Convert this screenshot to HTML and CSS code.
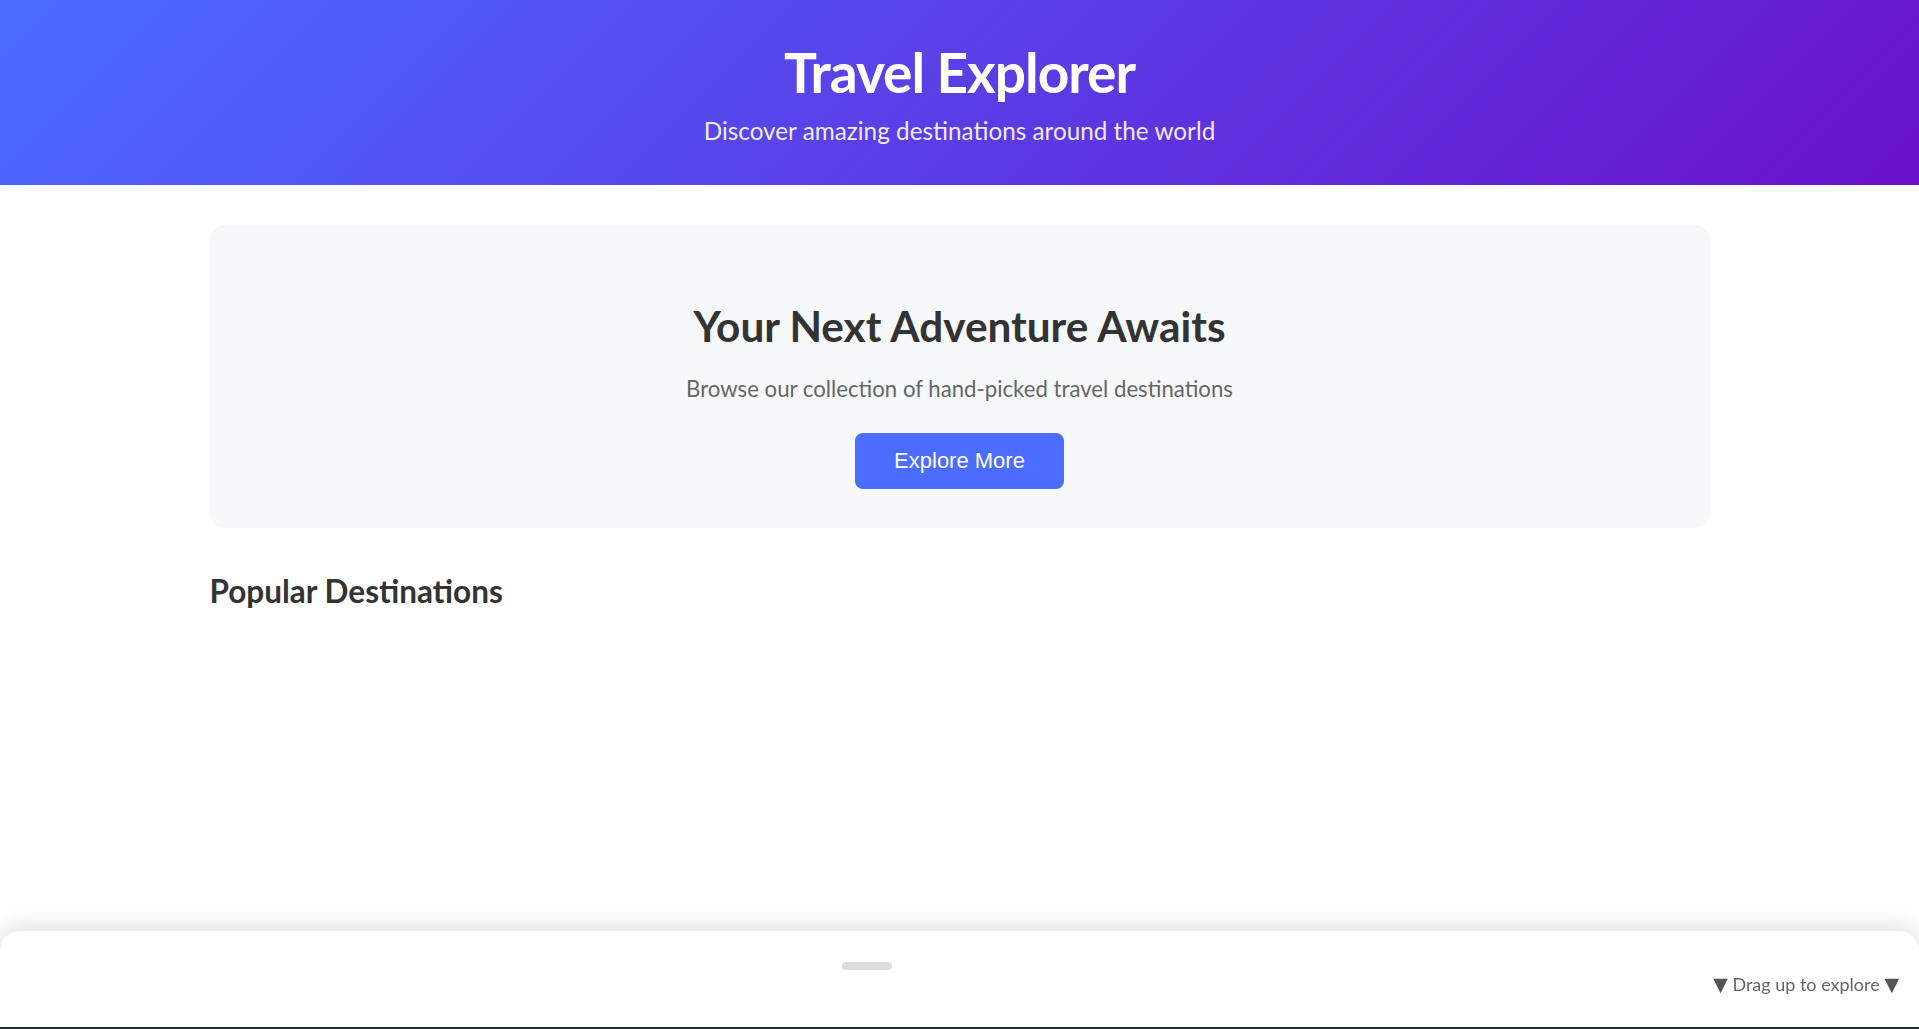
FILE: index.html
```html
<!DOCTYPE html>
<html lang="en">
<head>
<meta charset="utf-8">
<title>Travel Explorer</title>
<link rel="stylesheet" href="styles.css">
</head>
<body>
<header class="hero">
  <h1 class="hero-title">Travel Explorer</h1>
  <p class="hero-sub">Discover amazing destinations around the world</p>
</header>
<main class="container">
  <section class="promo">
    <h2 class="promo-title">Your Next Adventure Awaits</h2>
    <p class="promo-text">Browse our collection of hand-picked travel destinations</p>
    <button class="btn">Explore More</button>
  </section>
  <h2 class="section-title">Popular Destinations</h2>
</main>
<div class="sheet">
  <div class="sheet-row">
    <div class="handle"></div>
    <div class="hint"><span class="tri">▼</span> Drag up to explore <span class="tri">▼</span></div>
  </div>
</div>
</body>
</html>
```
FILE: styles.css
```css
html, body {
  margin: 0;
  padding: 0;
}
body {
  font-family: Lato, "Open Sans", sans-serif;
  background: #ffffff;
  color: #333333;
  height: 1029px;
  overflow: hidden;
}
.hero {
  background: linear-gradient(135deg, #4a6cff 0%, #6a11cb 100%);
  color: #ffffff;
  text-align: center;
  padding: 40px 0 39px;
}
.hero-title {
  margin: 0;
  font-size: 55px;
  line-height: 64px;
  font-weight: 700;
  letter-spacing: -1px;
}
.hero-sub {
  margin: 12px 0 0;
  font-size: 24.3px;
  line-height: 30px;
  color: rgba(255, 255, 255, 0.92);
}
.container {
  width: 1500px;
  margin: 40px auto 0;
}
.promo {
  background: #f7f8fa;
  border-radius: 15px;
  text-align: center;
  padding: 76px 0 39px;
  height: 303px;
  box-sizing: border-box;
}
.promo-title {
  margin: 0;
  font-size: 42.3px;
  line-height: 50px;
  font-weight: 700;
  color: #333333;
}
.promo-text {
  margin: 24px 0 0;
  font-size: 22.2px;
  line-height: 28px;
  color: #666666;
}
.btn {
  margin-top: 30px;
  height: 56px;
  border: none;
  border-radius: 8px;
  background: #4a6cff;
  color: #ffffff;
  font-family: "Liberation Sans", Arial, sans-serif;
  font-size: 22px;
  padding: 0 39px;
}
.section-title {
  margin: 45px 0 0;
  font-size: 31.5px;
  line-height: 36px;
  font-weight: 700;
  color: #333333;
}
.sheet {
  position: fixed;
  left: 0;
  right: 0;
  bottom: 0;
  height: 96px;
  background: #ffffff;
  border-radius: 20px 20px 0 0;
  box-shadow: 0 -6px 22px rgba(0, 0, 0, 0.12);
  border-bottom: 2px solid #1f2c33;
}
.sheet-row {
  display: flex;
  align-items: flex-start;
  padding: 31px 20px 0 842px;
}
.handle {
  width: 50px;
  height: 8px;
  border-radius: 4px;
  background: #dddddd;
}
.hint {
  margin-left: auto;
  margin-top: 10px;
  font-size: 18px;
  line-height: 24px;
  color: #666666;
}
.tri {
  font-family: "DejaVu Sans", sans-serif;
  font-size: 19px;
  color: #555555;
}
```
